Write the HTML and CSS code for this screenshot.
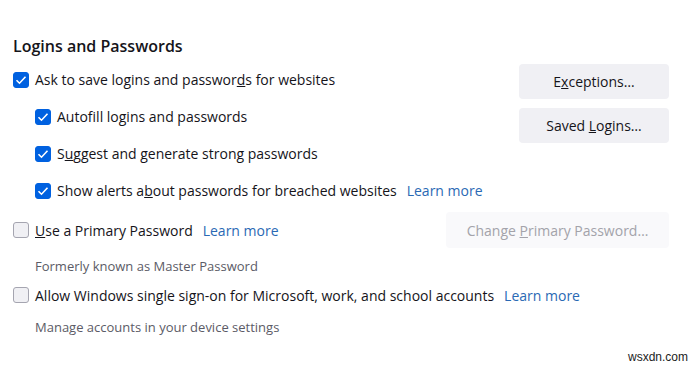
FILE: index.html
```html
<!DOCTYPE html>
<html lang="en">
<head>
    <meta charset="UTF-8">
    <meta name="viewport" content="width=device-width, initial-scale=1.0">
    <title>Logins and Passwords</title>
    <link rel="stylesheet" href="styles.css">
</head>
<body>
    <div class="pane">
        <h2 class="section-title">Logins and Passwords</h2>

        <div class="group">
            <div class="options">
                <label class="option">
                    <span class="box checked"></span>
                    <span>Ask to save logins and passwor<u>d</u>s for websites</span>
                </label>
                <label class="option sub">
                    <span class="box checked"></span>
                    <span>Autof<u>i</u>ll logins and passwords</span>
                </label>
                <label class="option sub">
                    <span class="box checked"></span>
                    <span>S<u>u</u>ggest and generate strong passwords</span>
                </label>
                <label class="option sub">
                    <span class="box checked"></span>
                    <span>Show alerts a<u>b</u>out passwords for breached websites</span>
                    <a class="learn" href="#">Learn more</a>
                </label>
            </div>
            <div class="buttons">
                <button class="btn">E<u>x</u>ceptions…</button>
                <button class="btn">Saved <u>L</u>ogins…</button>
            </div>
        </div>

        <div class="row primary">
            <label class="option">
                <span class="box"></span>
                <span><u>U</u>se a Primary Password</span>
                <a class="learn" href="#">Learn more</a>
            </label>
            <button class="btn wide" disabled>Change <u>P</u>rimary Password…</button>
        </div>
        <p class="note">Formerly known as Master Password</p>

        <div class="row sso">
            <label class="option">
                <span class="box"></span>
                <span>Allow Windows single sign-on for Microsoft, work, and school accounts</span>
                <a class="learn" href="#">Learn more</a>
            </label>
        </div>
        <p class="note last">Manage accounts in your device settings</p>
    </div>

    <div class="watermark">wsxdn.com</div>
</body>
</html>
```

FILE: styles.css
```css
body {
    margin: 0;
    background: #ffffff;
    color: #15141a;
    font-family: "Open Sans", "Noto Sans", sans-serif;
    font-size: 14px;
}

.pane {
    padding: 34px 31px 0 13px;
}

.section-title {
    margin: 0 0 3px;
    font-size: 16px;
    font-weight: 600;
    line-height: 24px;
}

.group {
    display: flex;
    justify-content: space-between;
}

.options {
    display: flex;
    flex-direction: column;
}

.option {
    display: flex;
    align-items: center;
    height: 37px;
}

.option.sub {
    padding-left: 22px;
}

.box {
    width: 16px;
    height: 16px;
    box-sizing: border-box;
    border: 1px solid #a5a5b0;
    border-radius: 3px;
    background: #f0f0f4;
    margin-right: 6px;
    flex-shrink: 0;
}

.box.checked {
    border-color: #0061e0;
    background: #0061e0 url("data:image/svg+xml,%3Csvg xmlns='http://www.w3.org/2000/svg' width='16' height='16'%3E%3Cpath d='M3.5 8.2l3 3 6-6.4' fill='none' stroke='white' stroke-width='1.6'/%3E%3C/svg%3E") center/16px 16px no-repeat;
}

.learn {
    margin-left: 10px;
    color: #2a69b4;
    text-decoration: none;
}

.buttons {
    display: flex;
    flex-direction: column;
    gap: 9px;
    padding-top: 3px;
}

.btn {
    width: 150px;
    height: 35px;
    border: none;
    border-radius: 4px;
    background: #f0f0f4;
    color: #15141a;
    font-family: inherit;
    font-size: 14px;
}

.btn.wide {
    width: 223px;
    height: 36px;
}

.btn:disabled {
    background: #f9f9fb;
    color: #a3a3aa;
}

.row {
    display: flex;
    justify-content: space-between;
    align-items: center;
}

.primary {
    margin-top: 3px;
}

.primary .option {
    height: 36px;
}

.sso {
    margin-top: 4px;
}

.sso .option {
    height: 30px;
}

.note {
    margin: 8px 0 0 22px;
    line-height: 20px;
    color: #5b5b66;
    font-size: 13px;
}

.note.last {
    margin-top: 7px;
}

.watermark {
    position: absolute;
    right: 12px;
    bottom: 7px;
    font-family: "Liberation Sans", Arial, sans-serif;
    font-size: 12px;
    color: #222;
}
```
